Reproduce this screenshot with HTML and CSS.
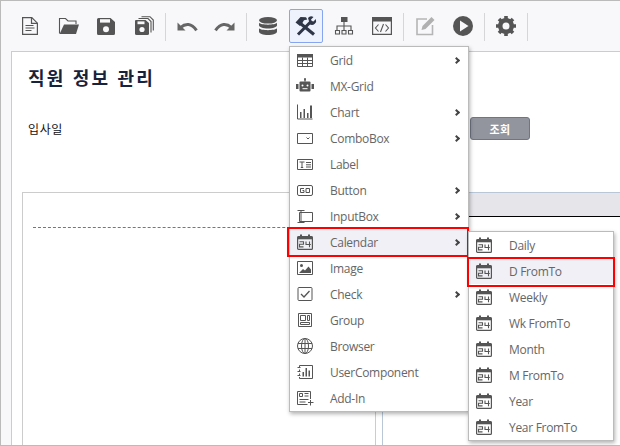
FILE: index.html
```html
<!DOCTYPE html>
<html lang="ko">
<head>
<meta charset="utf-8">
<title>직원 정보 관리</title>
<link rel="stylesheet" href="styles.css">
</head>
<body>
<svg class="defs" width="0" height="0" aria-hidden="true">
  <defs>
    <g id="cal">
      <rect x="1.600" y="3.600" width="14.800" height="12.800" rx="1" fill="none" stroke="#555" stroke-width="1.200"/>
      <path d="M1.500 3.500h15v2.800h-15z" fill="#555"/>
      <path d="M5 1.500v3M13 1.500v3" stroke="#555" stroke-width="2"/>
      <path d="M3.500 8.700h4v2.600h-4v2.600h4M10 8.500v3h4.800M13.500 8.500v5.700" fill="none" stroke="#555" stroke-width="1.100"/>
    </g>
  </defs>
</svg>
<div class="window">
  <div class="toolbar">
    <button class="tool"><svg class="ti" viewBox="0 0 24 24"><path d="M4.600 3.600h9.200l5.600 5.600v11.200H4.600z" fill="none" stroke="#555" stroke-width="1.200"/><path d="M13.500 3.600v5.800h5.800" fill="none" stroke="#555" stroke-width="1.200"/><path d="M7.500 11.500h8M7.500 14h9M7.500 16.500h6" stroke="#555" stroke-width="1.100"/></svg></button>
    <button class="tool"><svg class="ti" viewBox="0 0 24 24"><path d="M3.500 19.500V4.500h6l2.500 2.500h8v3" fill="none" stroke="#555" stroke-width="1.100"/><path d="M8 10.500h15l-3 9.500H3.600z" fill="#555"/></svg></button>
    <button class="tool"><svg class="ti" viewBox="0 0 24 24"><path d="M4.500 4h12l4.500 4v11.500a1.500 1.500 0 0 1-1.500 1.500h-15A1.500 1.500 0 0 1 3 19.500v-14A1.500 1.500 0 0 1 4.500 4z" fill="#555"/><rect x="6" y="5.200" width="10" height="3.400" fill="#f8f8fb"/><circle cx="12" cy="15.200" r="3" fill="#f8f8fb"/></svg></button>
    <button class="tool"><svg class="ti" viewBox="0 0 24 24"><path d="M4 6h9.500l3.500 3v10.500a1.500 1.500 0 0 1-1.500 1.500H4.500A1.500 1.500 0 0 1 3 19.500v-12.500A1 1 0 0 1 4 6z" fill="#555"/><rect x="5.500" y="7.400" width="7" height="2.800" fill="#f8f8fb"/><circle cx="10" cy="15.500" r="2.600" fill="#f8f8fb"/><path d="M6.500 4.500h9.500l3 3v11M9.500 2.700h8.500l3.300 3.300v10.500" fill="none" stroke="#555" stroke-width="1.100"/></svg></button>
    <span class="sep"></span>
    <button class="tool"><svg class="ti" viewBox="0 0 24 24"><path d="M2.500 8.500v8h8z" fill="#666"/><path d="M5.500 13.500c5-4.500 11-4.500 16 2.800" fill="none" stroke="#666" stroke-width="3"/></svg></button>
    <button class="tool"><svg class="ti" viewBox="0 0 24 24"><path d="M21.500 8.500v8h-8z" fill="#666"/><path d="M18.500 13.500c-5-4.500-11-4.500-16 2.800" fill="none" stroke="#666" stroke-width="3"/></svg></button>
    <span class="sep"></span>
    <button class="tool"><svg class="ti" viewBox="0 0 24 24"><ellipse cx="12" cy="6.300" rx="9" ry="3.300" fill="#555"/><path d="M3 8.800c2 2.500 16 2.500 18 0v2.500c0 1.800-4 3.300-9 3.300s-9-1.500-9-3.300z" fill="#555"/><path d="M3 14.300c2 2.500 16 2.500 18 0v3.200c0 2-4 3.500-9 3.500s-9-1.500-9-3.500z" fill="#555"/></svg></button>
    <button class="tool active"><svg class="ti" viewBox="0 0 24 24"><path d="M6.500 9.500l13.500 11" stroke="#2e3648" stroke-width="3.200"/><path d="M1.500 8.500l5-5.500 5.500.3 1.300 2.200-3.300.7-2.500 4.300-1.500 1.500z" fill="#2e3648"/><path d="M4 20.500L17 7.500" stroke="#2e3648" stroke-width="3"/><path d="M14 4a4.200 4.200 0 0 1 5.500-1L17 5.500l.8 1.600 1.700.5L21.800 5a4.300 4.300 0 0 1-5.800 5.500z" fill="#2e3648"/></svg></button>
    <button class="tool"><svg class="ti" viewBox="0 0 24 24"><rect x="9" y="3" width="6.500" height="5" fill="#555"/><path d="M12 8v4M5 16v-4h14v4M12 12v4" fill="none" stroke="#555" stroke-width="1.100"/><path d="M3.500 16.500h4v3.500h-4zM10 16.500h4v3.500h-4zM16.500 16.500h4v3.500h-4z" fill="none" stroke="#555" stroke-width="1.100"/></svg></button>
    <button class="tool"><svg class="ti" viewBox="0 0 24 24"><path d="M2.600 3.600h18.800v16.800H2.600z" fill="none" stroke="#555" stroke-width="1.200"/><rect x="2" y="3" width="20" height="4.500" fill="#555"/><path d="M8.500 10.500L5.500 14l3 3.500M15.500 10.500l3 3.500-3 3.500M13.500 10l-3 8" fill="none" stroke="#555" stroke-width="1.100"/></svg></button>
    <span class="sep"></span>
    <button class="tool"><svg class="ti" viewBox="0 0 24 24"><path d="M14 5H4v15.500h15.500V11" fill="none" stroke="#b5b5b5" stroke-width="1.600"/><path d="M18.500 3l3 3L12.500 15l-4 1 1-4z" fill="#b0b0b0"/></svg></button>
    <button class="tool"><svg class="ti" viewBox="0 0 24 24"><circle cx="12" cy="12" r="10" fill="#555"/><path d="M9 6.500l8.500 5.500-8.500 5.500z" fill="#f8f8fb"/></svg></button>
    <span class="sep"></span>
    <button class="tool"><svg class="ti" viewBox="0 0 24 24"><circle cx="12" cy="12" r="6" fill="none" stroke="#555" stroke-width="4"/><path d="M12 2v20M2 12h20M5 5l14 14M19 5L5 19" stroke="#555" stroke-width="3.600"/><circle cx="12" cy="12" r="3.500" fill="#f8f8fb"/></svg></button>
    <span class="sep"></span>
  </div>

  <div class="panel">
    <h1 class="title">직원 정보 관리</h1>
    <div class="filter">
      <span class="filter-label">입사일</span>
      <button class="search">조회</button>
    </div>
    <div class="workspace">
      <div class="box-left"><div class="dashed"></div></div>
      <div class="box-right"><div class="box-head"></div></div>
    </div>
  </div>

  <ul class="menu main-menu">
    <li class="row"><svg class="mi" viewBox="0 0 18 18"><path d="M1.500 3.500h15v12h-15zM1.500 9.500h15M1.500 12.500h15M6.500 6.500v9M11.500 6.500v9" fill="none" stroke="#555"/><rect x="1" y="3" width="16" height="3.500" fill="#555"/></svg><span>Grid</span><i class="chev"></i></li>
    <li class="row"><svg class="mi" viewBox="0 0 18 18"><rect x="3.500" y="4.500" width="11" height="10" rx="1" fill="#555"/><path d="M9 4.500V2" stroke="#555" stroke-width="1.500"/><circle cx="9" cy="2" r="1" fill="#555"/><rect x="0" y="7" width="2.500" height="5" fill="#555"/><rect x="15.500" y="7" width="2.500" height="5" fill="#555"/><circle cx="6.500" cy="8.500" r="1" fill="#fff"/><circle cx="11.500" cy="8.500" r="1" fill="#fff"/><path d="M6.500 11.700h5" stroke="#fff"/></svg><span>MX-Grid</span></li>
    <li class="row"><svg class="mi" viewBox="0 0 18 18"><path d="M1.500 1.500v14.500h15" fill="none" stroke="#555"/><path d="M4 9h1.500v6H4zM7.500 6H9v9H7.500zM11 10h1.500v5H11zM14 2.500h2V15h-2z" fill="#555"/></svg><span>Chart</span><i class="chev"></i></li>
    <li class="row"><svg class="mi" viewBox="0 0 18 18"><path d="M1.500 4.500h15v10h-15z" fill="none" stroke="#555"/><path d="M10.500 8.500l1.500 1.500 1.500-1.500" fill="none" stroke="#555"/></svg><span>ComboBox</span><i class="chev"></i></li>
    <li class="row"><svg class="mi" viewBox="0 0 18 18"><path d="M1.500 4.500h15v10h-15z" fill="none" stroke="#555"/><path d="M3.500 7h5M6 7v5.500M4.800 12.500h2.400M10 7.500h5M10 9.800h5M10 12h5" fill="none" stroke="#555"/></svg><span>Label</span></li>
    <li class="row"><svg class="mi" viewBox="0 0 18 18"><rect x="1.500" y="4.500" width="15" height="10" rx="1.500" fill="none" stroke="#555"/><path d="M8 7.500H4.500v4H8V9.500H6.500M10 7.500h3.500v4H10z" fill="none" stroke="#555"/></svg><span>Button</span><i class="chev"></i></li>
    <li class="row"><svg class="mi" viewBox="0 0 18 18"><path d="M3.500 5.500h13v9h-13z" fill="none" stroke="#555"/><path d="M1.500 3.500h7M1.500 15.500h7M5 3.500v12" fill="none" stroke="#555"/></svg><span>InputBox</span><i class="chev"></i></li>
    <li class="row hot"><svg class="mi" viewBox="0 0 18 18"><use href="#cal"/></svg><span>Calendar</span><i class="chev"></i></li>
    <li class="row"><svg class="mi" viewBox="0 0 18 18"><path d="M1.500 2.500h15v13h-15z" fill="none" stroke="#555"/><circle cx="5.500" cy="6.500" r="1.500" fill="#555"/><path d="M3 14l4-4 2 1.500 3.500-4 2.500 3V14z" fill="#555"/></svg><span>Image</span></li>
    <li class="row"><svg class="mi" viewBox="0 0 18 18"><rect x="2" y="2.500" width="14" height="13" rx="1" fill="none" stroke="#555"/><path d="M5 9l3 3 5.500-6" fill="none" stroke="#555" stroke-width="1.300"/></svg><span>Check</span><i class="chev"></i></li>
    <li class="row"><svg class="mi" viewBox="0 0 18 18"><path d="M2.500 2.500h13v13h-13z" fill="none" stroke="#555"/><path d="M4.500 4.500h5v5h-5zM11.500 4.500h2v5h-2zM4.500 11.500h9v2h-9z" fill="none" stroke="#555"/></svg><span>Group</span></li>
    <li class="row"><svg class="mi" viewBox="0 0 18 18"><circle cx="9" cy="9" r="7.500" fill="none" stroke="#555"/><ellipse cx="9" cy="9" rx="3.500" ry="7.500" fill="none" stroke="#555"/><path d="M9 1.500v15M2 6.500h14M2 11.500h14" stroke="#555"/></svg><span>Browser</span></li>
    <li class="row"><svg class="mi" viewBox="0 0 18 18"><path d="M3.500 2.500h13v13h-13" fill="none" stroke="#555"/><path d="M3.500 2.500v2M3.500 6.500v2M3.500 10.500v2M3.500 14v1.500M1.500 4.500h3M1.500 8.500h3M1.500 12.500h3" stroke="#555"/><path d="M6.500 9h1.500v4.500H6.500zM9.500 5h1.500v8.500H9.500zM12.500 7.500h1.500v6h-1.500z" fill="#555"/></svg><span>UserComponent</span></li>
    <li class="row"><svg class="mi" viewBox="0 0 18 18"><path d="M14.500 10V2.500h-13v13h10" fill="none" stroke="#555"/><path d="M3.500 4.500h3v3h-3zM8.500 4.500h4M8.500 7h4M3.500 10.500h9M3.500 13h6M12 13.500h5.500M14.500 11v5.500" fill="none" stroke="#555"/></svg><span>Add-In</span></li>
  </ul>

  <ul class="menu sub-menu">
    <li class="row"><svg class="mi" viewBox="0 0 18 18"><use href="#cal"/></svg><span>Daily</span></li>
    <li class="row hot"><svg class="mi" viewBox="0 0 18 18"><use href="#cal"/></svg><span>D FromTo</span></li>
    <li class="row"><svg class="mi" viewBox="0 0 18 18"><use href="#cal"/></svg><span>Weekly</span></li>
    <li class="row"><svg class="mi" viewBox="0 0 18 18"><use href="#cal"/></svg><span>Wk FromTo</span></li>
    <li class="row"><svg class="mi" viewBox="0 0 18 18"><use href="#cal"/></svg><span>Month</span></li>
    <li class="row"><svg class="mi" viewBox="0 0 18 18"><use href="#cal"/></svg><span>M FromTo</span></li>
    <li class="row"><svg class="mi" viewBox="0 0 18 18"><use href="#cal"/></svg><span>Year</span></li>
    <li class="row"><svg class="mi" viewBox="0 0 18 18"><use href="#cal"/></svg><span>Year FromTo</span></li>
  </ul>
</div>
</body>
</html>
```

FILE: styles.css
```css
* { box-sizing: border-box; }
html, body { margin: 0; padding: 0; background: #fff; }
body { font-family: "Noto Sans CJK KR", "Noto Sans", sans-serif; font-size: 12px; color: #222; }
.defs { position: absolute; }

.window {
  position: relative;
  width: 620px;
  height: 446px;
  border: 1px solid #bbb;
  border-right: 0;
  background: #f8f8fb;
  display: flex;
  flex-direction: column;
  overflow: hidden;
}

.toolbar {
  flex: none;
  height: 50px;
  padding: 8px 0 0 12px;
  display: flex;
  align-items: flex-start;
  gap: 4px;
}
.tool {
  width: 34px;
  height: 34px;
  padding: 0;
  border: 1px solid transparent;
  border-radius: 2px;
  background: none;
  display: flex;
  align-items: center;
  justify-content: center;
}
.tool.active { background: #eef2fd; border-color: #86a6f2; }
.ti { width: 24px; height: 24px; display: block; }
.sep { flex: none; width: 1px; height: 28px; margin-top: 4px; background: #d6d6d8; }

.panel {
  flex: 1;
  min-height: 0;
  margin-left: 10px;
  padding: 12px 0 0 10px;
  border-left: 1px solid #ccc;
  border-top: 1px solid #ccc;
  background: #fff;
  display: flex;
  flex-direction: column;
}
.title {
  flex: none;
  margin: 0;
  padding-left: 6px;
  height: 26px;
  font-size: 18px;
  font-weight: 700;
  line-height: 26px;
  letter-spacing: 2.2px;
  color: #17233c;
}
.filter {
  flex: none;
  margin-top: 27px;
  padding-left: 6px;
  height: 23px;
  display: flex;
  align-items: center;
}
.filter-label { width: 442px; font-size: 12px; letter-spacing: .6px; color: #111; }
.search {
  width: 60px;
  height: 23px;
  padding: 0;
  border: 1px solid #6f7682;
  border-radius: 3px;
  background: #92959d;
  color: #fff;
  font: 700 11px "Noto Sans CJK KR", sans-serif;
  letter-spacing: .5px;
}
.workspace { flex: 1; min-height: 0; margin-top: 52px; display: flex; }
.box-left {
  flex: none;
  width: 354px;
  border: 1px solid #ccc;
  border-bottom: 0;
  padding: 34px 0 0 10px;
}
.dashed { border-top: 1px dashed #777; }
.box-right { flex: 1; margin-left: 6px; border-left: 1px solid #b8c6d8; }
.box-head {
  height: 25px;
  background: #e5e5ea;
  border-top: 1px solid #b8c6d8;
  border-bottom: 1px solid #000;
}

.menu {
  position: absolute;
  margin: 0;
  padding: 0;
  list-style: none;
  background: #fff;
  border: 1px solid #bbb;
  box-shadow: 1px 2px 4px rgba(0,0,0,.3);
  font-family: "Open Sans", "Noto Sans", sans-serif;
  letter-spacing: -.3px;
  color: #666;
}
.main-menu { left: 288px; top: 45px; width: 180px; }
.sub-menu { left: 467px; top: 230px; width: 146px; }
.row {
  position: relative;
  height: 26px;
  display: flex;
  align-items: center;
  padding-left: 6px;
  line-height: 26px;
}
.row span { margin-top: 2px; }
.mi { flex: none; width: 18px; height: 18px; margin-right: 16px; display: block; }
.chev {
  position: absolute;
  right: 9px;
  top: 11px;
  width: 5px;
  height: 5px;
  border-top: 2px solid #444;
  border-right: 2px solid #444;
  transform: rotate(45deg);
}
.hot { background: #f0f0f6; }
.hot::after {
  content: "";
  position: absolute;
  inset: -2px -1px -2px -3px;
  border: 2px solid #f00;
}
.sub-menu .hot::after { inset: -1px -2px -3px -2px; }
```
